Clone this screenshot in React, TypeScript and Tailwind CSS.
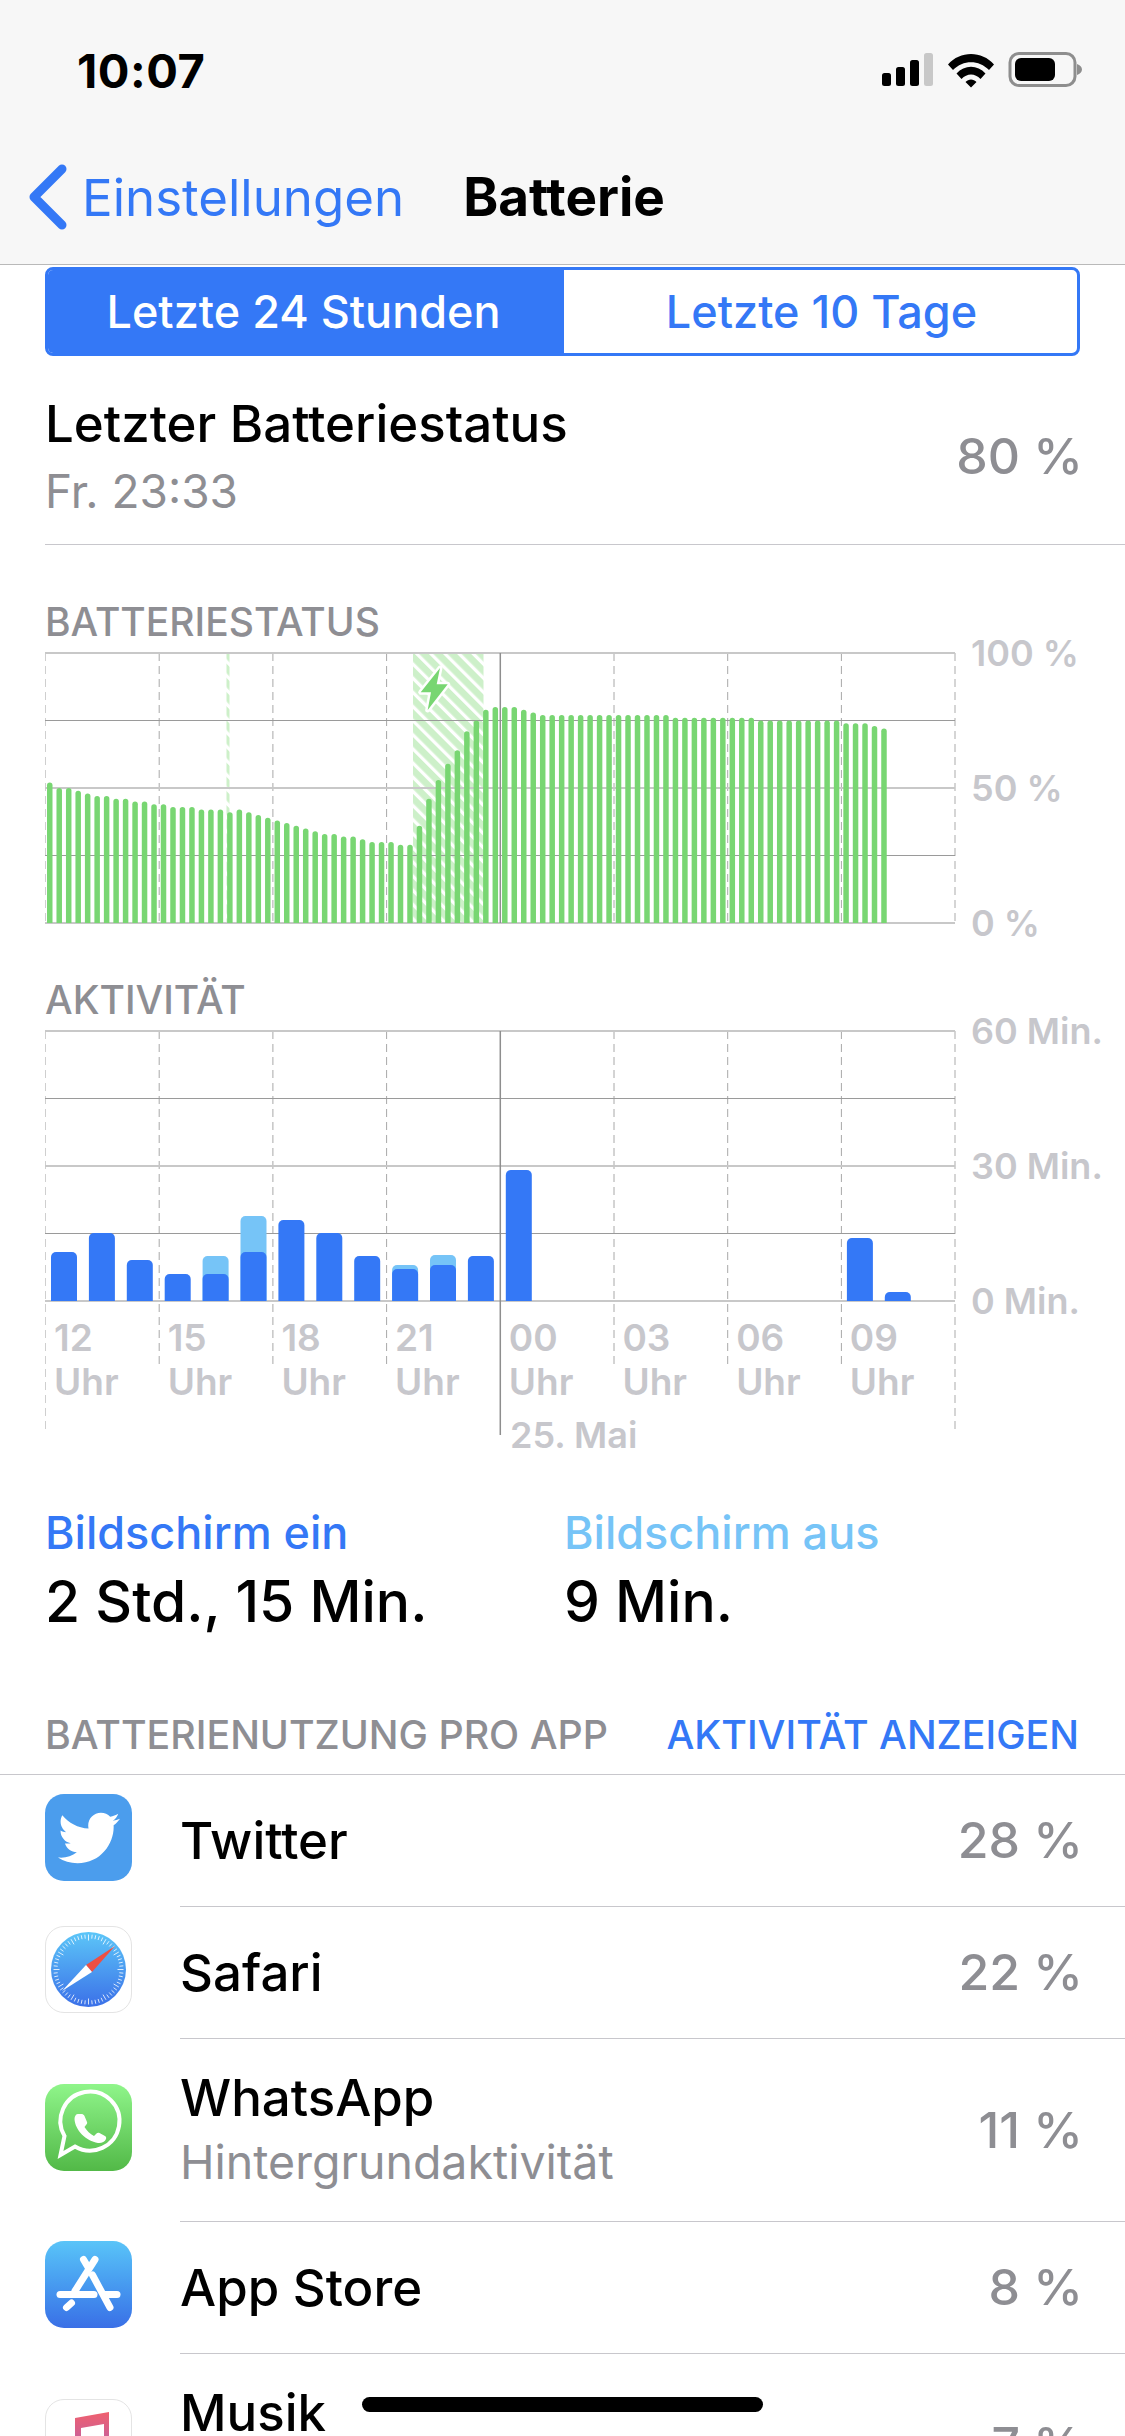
import { FaTwitter } from 'react-icons/fa';

// battery level per 15 min slot, in percent
const batteryLevels = [
  52, 50, 50, 49, 48, 47, 47, 46, 46, 45, 45, 44, 44, 43, 43, 43, 42, 42, 42, 41, 42, 41, 40, 39, 38, 37, 36, 35, 34, 33,
  33, 32, 32, 31, 30, 30, 30, 29, 29, 36, 46, 53, 59, 64, 71, 75, 79, 80, 80, 80, 79, 78, 77, 77, 77, 77, 77, 77, 77, 77,
  77, 77, 77, 77, 77, 77, 76, 76, 76, 76, 76, 76, 76, 76, 76, 75, 75, 75, 75, 75, 75, 75, 75, 75, 74, 74, 74, 73, 72,
];

// activity per hour: [slot, screen on px, total px]
const activityBars = [
  [0, 49, 49], [1, 68, 68], [2, 41, 41], [3, 27, 27], [4, 27, 45], [5, 49, 85], [6, 81, 81], [7, 68, 68],
  [8, 45, 45], [9, 32, 36], [10, 36, 46], [11, 45, 45], [12, 131, 131], [21, 63, 63], [22, 9, 9],
];

const hours = ['12', '15', '18', '21', '00', '03', '06', '09'];
const gridX = hours.map((_, i) => 0.5 + i * 113.7);
const rightX = 910;

const GridLines = () => (
  <>
    <line x1="0" x2={rightX} y1="1" y2="1" stroke="#c8c8c8" strokeWidth="2" />
    <line x1="0" x2={rightX} y1="68.5" y2="68.5" stroke="#9a9a9a" strokeWidth="1" />
    <line x1="0" x2={rightX} y1="136" y2="136" stroke="#c8c8c8" strokeWidth="2" />
    <line x1="0" x2={rightX} y1="203.5" y2="203.5" stroke="#9a9a9a" strokeWidth="1" />
    <line x1="0" x2={rightX} y1="271" y2="271" stroke="#c8c8c8" strokeWidth="2" />
  </>
);

const BatteryChart = () => (
  <svg width="912" height="273" className="block shrink-0">
    <defs>
      <pattern id="hatch" width="10" height="10" patternUnits="userSpaceOnUse" patternTransform="rotate(-45)">
        <rect width="10" height="10" fill="#cdf0c9" />
        <rect width="3.3" height="10" fill="#ffffff" />
      </pattern>
      <clipPath id="batteryArea">
        <rect x="0" y="0" width="912" height="271" />
      </clipPath>
    </defs>
    <rect x="368" y="1" width="70.5" height="270" fill="url(#hatch)" />
    <rect x="181.5" y="1" width="3" height="270" fill="url(#hatch)" />
    {gridX.map((x, i) =>
      i === 4 ? null : (
        <line
          key={x}
          x1={x}
          x2={x}
          y1="1"
          y2="271"
          stroke={i === 0 ? '#cfcfcf' : '#a8a8a8'}
          strokeWidth="1"
          strokeDasharray="8 5"
        />
      ),
    )}
    <line x1={rightX} x2={rightX} y1="1" y2="271" stroke="#c8c8c8" strokeWidth="1.5" strokeDasharray="8 5" />
    <GridLines />
    <line x1={gridX[4]} x2={gridX[4]} y1="1" y2="271" stroke="#8e8e8e" strokeWidth="1.5" />
    <g clipPath="url(#batteryArea)">
      {batteryLevels.map((level, i) => (
        <rect
          key={i}
          x={2 + i * 9.48}
          y={271 - level * 2.7}
          width="5.5"
          height={level * 2.7 + 4}
          rx="2.75"
          fill="#78d672"
        />
      ))}
    </g>
    <polygon
      points="395,16 375.700,40.300 386,40.300 382.700,58 402.700,32.300 391.700,32.300"
      fill="#78d672"
      stroke="#ffffff"
      strokeWidth="5"
      strokeLinejoin="round"
      paintOrder="stroke"
    />
  </svg>
);

const ActivityChart = () => (
  <svg width="912" height="405" className="block shrink-0">
    <defs>
      <clipPath id="activityArea">
        <rect x="0" y="0" width="912" height="271" />
      </clipPath>
    </defs>
    {gridX.map((x, i) =>
      i === 4 ? null : (
        <line
          key={x}
          x1={x}
          x2={x}
          y1="1"
          y2={i === 0 ? 402 : 338}
          stroke={i === 0 ? '#cfcfcf' : '#a8a8a8'}
          strokeWidth="1"
          strokeDasharray="8 5"
        />
      ),
    )}
    <line x1={rightX} x2={rightX} y1="1" y2="402" stroke="#c8c8c8" strokeWidth="1.5" strokeDasharray="8 5" />
    <GridLines />
    <line x1={gridX[4]} x2={gridX[4]} y1="1" y2="405" stroke="#8e8e8e" strokeWidth="1.5" />
    <g clipPath="url(#activityArea)">
      {activityBars.map(([slot, on, total]) => (
        <g key={slot}>
          {total > on && (
            <rect x={6 + slot * 37.9} y={271 - total} width="26" height={total + 6} rx="5" fill="#76c4f7" />
          )}
          <rect x={6 + slot * 37.9} y={271 - on} width="26" height={on + 6} rx="5" fill="#3478f6" />
        </g>
      ))}
    </g>
  </svg>
);

const AxisLabels = ({ labels }: { labels: string[] }) => (
  <div className="ml-[14px] mt-px flex h-[270px] flex-col justify-between">
    {labels.map(label => (
      <div key={label} className="flex h-0 items-center whitespace-nowrap text-[36px] font-semibold text-[#c7c7cc]">
        {label}
      </div>
    ))}
  </div>
);

const SafariIcon = () => {
  const ticks = Array.from({ length: 60 }, (_, i) => (i * Math.PI) / 30);
  return (
    <div className="size-[87px] rounded-[19px] border border-[#e4e4e4] bg-white">
      <svg viewBox="0 0 85 85" className="size-full">
        <defs>
          <linearGradient id="safariBlue" x1="0" y1="0" x2="0" y2="1">
            <stop offset="0" stopColor="#5cc6f8" />
            <stop offset="1" stopColor="#3b70e8" />
          </linearGradient>
        </defs>
        <circle cx="42.5" cy="42.5" r="37.5" fill="url(#safariBlue)" />
        {ticks.map((a, i) => (
          <line
            key={i}
            x1={42.5 + Math.cos(a) * 35}
            y1={42.5 + Math.sin(a) * 35}
            x2={42.5 + Math.cos(a) * (i % 5 === 0 ? 29 : 31)}
            y2={42.5 + Math.sin(a) * (i % 5 === 0 ? 29 : 31)}
            stroke="#ffffff"
            strokeWidth="0.8"
          />
        ))}
        <polygon points="69,19 40,38 46,45" fill="#ee4f43" />
        <polygon points="16,64 40,38 46,45" fill="#ffffff" />
      </svg>
    </div>
  );
};

const TwitterIcon = () => (
  <div className="flex size-[87px] items-center justify-center rounded-[19px] bg-[#4b9ded]">
    <FaTwitter className="size-[62px] text-white" />
  </div>
);

const WhatsAppIcon = () => (
  <div className="size-[87px] rounded-[19px] bg-gradient-to-b from-[#8ff58a] to-[#52b947]">
    <svg viewBox="0 0 87 87" className="size-full">
      <path d="M19.500 52A29.500 29.500 0 1 1 30 62.500L15.500 71Z" fill="none" stroke="#ffffff" strokeWidth="4" />
      <path
        d="M33 30H37C38 30 39 31 39.500 32L42 38C42.500 39 42 40 41 41L39.500 43C42 47 45 50 49 52L51.500 49.500C52.500 48.500 53.500 48.500 54.500 49L60 52C61 52.500 61.500 53.500 61 55C60 58 56 59.500 53 59C41 57 30 46 29.500 35C29.500 32 31 30 33 30Z"
        fill="#ffffff"
      />
    </svg>
  </div>
);

const AppStoreIcon = () => (
  <div className="size-[87px] rounded-[19px] bg-gradient-to-b from-[#5ac4f8] to-[#3a6fe6]">
    <svg viewBox="0 0 87 87" className="size-full" fill="none" stroke="#ffffff" strokeWidth="7" strokeLinecap="round">
      <path d="M50 18.500 30 50" />
      <path d="M38.500 18.500 43.500 27" />
      <path d="M47.500 34 65 66.500" />
      <path d="M15 53.500H49" />
      <path d="M59 53.500H72" />
      <path d="M26.500 62 21.500 66.500" />
    </svg>
  </div>
);

const MusicIcon = () => (
  <div className="size-[87px] rounded-[19px] border border-[#e4e4e4] bg-white">
    <svg viewBox="0 0 85 85" className="size-full">
      <defs>
        <linearGradient id="musicNote" x1="0" y1="0" x2="0" y2="1">
          <stop offset="0" stopColor="#f0606e" />
          <stop offset="1" stopColor="#a060c8" />
        </linearGradient>
      </defs>
      <path
        d="M29 18 63 12V56C63 63 50 66 49 57 49 51 54 49 58 48V24L35 28V63C35 70 22 73 21 64 21 58 26 56 29 55Z"
        fill="url(#musicNote)"
      />
    </svg>
  </div>
);

type AppRow = {
  name: string;
  detail?: string;
  percent: string;
  height: string;
  icon: React.ReactNode;
};

const apps: AppRow[] = [
  { name: 'Twitter', percent: '28 %', height: 'h-[132px]', icon: <TwitterIcon /> },
  { name: 'Safari', percent: '22 %', height: 'h-[132px]', icon: <SafariIcon /> },
  { name: 'WhatsApp', detail: 'Hintergrundaktivität', percent: '11 %', height: 'h-[183px]', icon: <WhatsAppIcon /> },
  { name: 'App Store', percent: '8 %', height: 'h-[132px]', icon: <AppStoreIcon /> },
  { name: 'Musik', detail: 'Hintergrundaktivität', percent: '7 %', height: 'h-[183px]', icon: <MusicIcon /> },
];

const App = () => {
  return (
    <div className="relative h-[2436px] w-[1125px] overflow-hidden bg-white font-[family-name:Inter,sans-serif] text-black">
      {/* Status bar + nav */}
      <header className="h-[265px] border-b border-[#b9b9b9] bg-[#f7f7f7]">
        <div className="flex h-[140px] items-center justify-between pl-[77px] pr-[43px]">
          <span className="text-[47px] font-bold leading-none tracking-[0.5px]">10:07</span>
          <svg width="200" height="36" viewBox="0 0 200 36" className="block">
            <rect x="0" y="21" width="9" height="13" rx="2.5" fill="#000" />
            <rect x="14" y="15" width="9" height="19" rx="2.5" fill="#000" />
            <rect x="28" y="8" width="9" height="26" rx="2.5" fill="#000" />
            <rect x="42" y="1" width="9" height="33" rx="2.5" fill="#c8c8c8" />
            <path
              d="M66 12.500C78-1.500 100-1.500 112 12.500L107 18C97 7.500 81 7.500 71 18ZM74.500 21.500C82.500 12.500 95.500 12.500 103.500 21.500L98.500 27C93 21 85 21 79.500 27ZM83.500 30C86.500 26.500 91.500 26.500 94.500 30L89 35.500Z"
              fill="#000"
            />
            <rect x="128" y="1.500" width="65" height="32" rx="9" fill="none" stroke="#8e8e8e" strokeWidth="3" />
            <rect x="133" y="6" width="40" height="23" rx="6" fill="#000" />
            <path d="M195 12c3 1 5 3 5 5.500s-2 4.500-5 5.500Z" fill="#8e8e8e" />
          </svg>
        </div>
        <div className="flex h-[114px] items-center pl-[28px]">
          <svg width="40" height="66" viewBox="0 0 40 66" fill="none" className="mr-[14px] block">
            <path d="M34 5 6 33l28 28" stroke="#3478f6" strokeWidth="9" strokeLinecap="round" strokeLinejoin="round" />
          </svg>
          <span className="text-[51px] leading-none text-[#3478f6]">Einstellungen</span>
          <span className="ml-[59px] text-[53px] font-bold leading-none">Batterie</span>
        </div>
      </header>

      {/* Range switch */}
      <div className="mx-[45px] mt-[2px] flex h-[89px] overflow-hidden rounded-[8px] border-[3px] border-[#3478f6] text-[45px] font-medium">
        <div className="flex w-[516px] items-center justify-center bg-[#3478f6] pr-[5px] text-white">Letzte 24 Stunden</div>
        <div className="flex flex-1 items-center justify-center pl-[2px] text-[#3478f6]">Letzte 10 Tage</div>
      </div>

      {/* Last status */}
      <div className="ml-[45px] flex h-[189px] items-center justify-between border-b border-[#c8c7cc] pr-[42px] pt-[12px]">
        <div>
          <div className="text-[51px] font-medium leading-[56px]">Letzter Batteriestatus</div>
          <div className="mt-[13px] text-[46px] leading-[52px] text-[#8e8e93]">Fr. 23:33</div>
        </div>
        <div className="text-[50px] font-medium text-[#8e8e93]">80 %</div>
      </div>

      {/* Battery chart */}
      <div className="mt-[55px] pl-[45px] text-[39px] font-medium leading-[44px] text-[#8e8e93]">BATTERIESTATUS</div>
      <div className="mt-[8px] flex pl-[45px]">
        <BatteryChart />
        <AxisLabels labels={['100 %', '50 %', '0 %']} />
      </div>

      {/* Activity chart */}
      <div className="mt-[53px] pl-[45px] text-[39px] font-medium leading-[44px] text-[#8e8e93]">AKTIVITÄT</div>
      <div className="relative mt-[8px] flex pl-[45px]">
        <ActivityChart />
        <AxisLabels labels={['60 Min.', '30 Min.', '0 Min.']} />
        <div className="absolute left-[45px] top-[286px] flex text-[37px] font-semibold leading-[44px] text-[#c7c7cc]">
          {hours.map(hour => (
            <div key={hour} className="w-[113.7px] pl-[9px]">
              <div>{hour}</div>
              <div>Uhr</div>
            </div>
          ))}
        </div>
        <div className="absolute left-[510px] top-[383px] text-[36px] font-semibold leading-[44px] text-[#c7c7cc]">
          25. Mai
        </div>
      </div>

      {/* Screen on / off */}
      <div className="mt-[73px] flex pl-[45px]">
        <div className="w-[519px]">
          <div className="text-[45px] font-medium leading-[50px] text-[#3478f6]">Bildschirm ein</div>
          <div className="mt-[14px] text-[57px] font-medium leading-[60px]">2 Std., 15 Min.</div>
        </div>
        <div>
          <div className="text-[45px] font-medium leading-[50px] text-[#76c4f7]">Bildschirm aus</div>
          <div className="mt-[14px] text-[57px] font-medium leading-[60px]">9 Min.</div>
        </div>
      </div>

      {/* Usage per app */}
      <div className="mt-[81px] flex h-[62px] items-center justify-between border-b border-[#c8c7cc] pb-[16px] pl-[45px] pr-[46px] text-[39.3px] font-medium">
        <span className="text-[#8e8e93]">BATTERIENUTZUNG PRO APP</span>
        <span className="text-[#3478f6]">AKTIVITÄT ANZEIGEN</span>
      </div>
      {apps.map(app => (
        <div key={app.name} className={`flex items-center pl-[45px] ${app.height}`}>
          <div className="mb-[7px] mr-[48px] shrink-0">{app.icon}</div>
          <div className="flex h-full flex-1 items-center justify-between border-b border-[#c8c7cc] pr-[42px]">
            <div className={app.detail ? 'mb-[6px]' : ''}>
              <div className="text-[51px] font-medium leading-[60px]">{app.name}</div>
              {app.detail && <div className="mt-[10px] text-[46.5px] leading-[48px] text-[#8e8e93]">{app.detail}</div>}
            </div>
            <div className="text-[50px] font-medium text-[#8e8e93]">{app.percent}</div>
          </div>
        </div>
      ))}

      {/* Home indicator */}
      <div className="absolute left-[362px] top-[2397px] h-[15px] w-[401px] rounded-full bg-black" />
    </div>
  );
};

export default App;
